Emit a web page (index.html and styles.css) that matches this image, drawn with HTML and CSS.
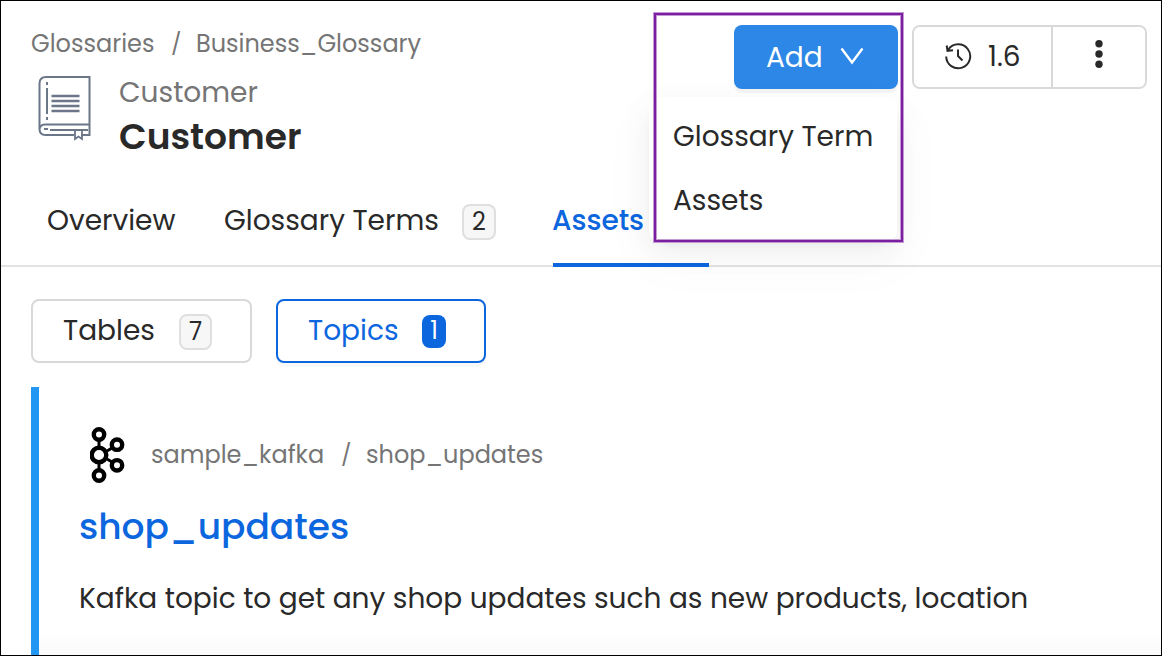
FILE: index.html
```
<!DOCTYPE html>
<html lang="en">
<head>
<meta charset="utf-8">
<title>Customer - Glossary</title>
<link rel="stylesheet" href="styles.css">
</head>
<body>
<div class="page">
  <header class="header">
    <div class="heading">
      <nav class="crumbs"><span class="crumb-root">Glossaries</span><span class="slash">/</span><span class="crumb-leaf">Business_Glossary</span></nav>
      <div class="title-row">
        <svg class="book" width="54" height="66" viewBox="0 0 54 66" fill="none" stroke="#6b7688" stroke-width="2">
          <path d="M52.500 1H9Q2.500 1 2.500 7.500V53q0 6 6 6H37M52.500 0v60M44 59h9M52.500 48.500H8Q2.500 48.500 2.500 54"/>
          <path d="M10 6v3M10 12v26M10 41v3M7 53h4M13 54h38"/>
          <path stroke-width="2.400" d="M14.500 20h28M14.500 25h28M14.500 30h28M14.500 35h28"/>
          <path d="M38 54v9l3.500-2.500L45 63v-9" stroke-width="1.800"/>
        </svg>
        <div class="titles">
          <div class="subtitle">Customer</div>
          <h1 class="title">Customer</h1>
        </div>
      </div>
    </div>
    <div class="actions">
      <div class="add-wrap">
        <button class="add"><span class="add-label">Add</span>
          <svg width="24" height="18" viewBox="0 0 24 18" fill="none" stroke="#fff" stroke-width="2.400"><path d="M1.500 1.500 12 15.500 22.500 1.500"/></svg>
        </button>
        <div class="menu"><div class="item item-term">Glossary Term</div><div class="item item-assets">Assets</div></div>
        <div class="highlight"></div>
      </div>
      <div class="group">
        <button class="version">
          <svg width="28" height="28" viewBox="0 0 28 28" fill="none" stroke="#292929" stroke-width="2"><path d="M2.200 14.500A12 12 0 1 0 4.300 7.500M2.700 3.500l.8 5.300 5.500-.5M14 7.500V14l4.500 4.500"/></svg>
          <span class="version-label">1.6</span>
        </button>
        <button class="more"><svg width="8" height="28" viewBox="0 0 8 28" fill="#292929"><circle cx="4" cy="3.700" r="3.700"/><circle cx="4" cy="14" r="3.700"/><circle cx="4" cy="24.300" r="3.700"/></svg></button>
      </div>
    </div>
  </header>
  <nav class="tabs">
    <div class="tab tab-overview">Overview</div>
    <div class="tab tab-terms"><span class="tab-label">Glossary Terms</span><span class="badge">2</span></div>
    <div class="tab tab-assets">Assets</div>
  </nav>
  <div class="filters">
    <button class="filter tables"><span>Tables</span><span class="badge badge-tables">7</span></button>
    <button class="filter topics"><span>Topics</span><span class="badge badge-on">1</span></button>
  </div>
  <article class="card">
    <div class="source">
      <svg width="36" height="58" viewBox="0 0 36 58" fill="none" stroke="#000" stroke-width="4.400">
        <path stroke-width="3" d="M9 14v7M9 37v7M17 25l5-3M17 33l5 3"/>
        <circle cx="9" cy="8.500" r="5.200"/><circle cx="9" cy="29" r="7.300"/><circle cx="9" cy="49.500" r="5.200"/><circle cx="27" cy="18.700" r="5.200"/><circle cx="27" cy="39.300" r="5.200"/>
      </svg>
      <span class="src-root">sample_kafka</span><span class="slash">/</span><span class="src-leaf">shop_updates</span>
    </div>
    <h2 class="name">shop_updates</h2>
    <p class="desc">Kafka topic to get any shop updates such as new products, location</p>
  </article>
</div>
</body>
</html>
```
FILE: styles.css
```
* { box-sizing: border-box; }
body { margin: 0; font-family: Poppins, Inter, sans-serif; font-size: 28px; color: #292929; background: #fff; }
button { font: inherit; color: inherit; background: #fff; padding: 0; margin: 0; }
svg { display: block; flex: none; }
span, .item, .tab, .desc, .name { white-space: nowrap; }
.page { width: 1162px; height: 656px; overflow: hidden; border: 1px solid #000; display: flex; flex-direction: column; }
.header { display: flex; justify-content: space-between; height: 175px; padding: 24px 14px 0 30px; flex: none; }
.crumbs { display: flex; height: 38px; line-height: 38px; font-size: 24px; color: #757575; }
.crumb-root { width: 140px; }
.slash { width: 25px; font-size: 22px; }
.title-row { display: flex; gap: 28px; padding: 13px 0 0 6px; }
.titles { margin-top: -5px; }
.subtitle { height: 44px; line-height: 44px; color: #757575; }
.title { margin: 0; font-size: 36px; line-height: 44px; font-weight: 600; }
.actions { display: flex; gap: 14px; }
.add-wrap { position: relative; }
.add { display: flex; align-items: center; width: 164px; height: 64px; padding: 0 34px 3px 32px; justify-content: space-between; border: 0; border-radius: 8px; background: #2d87e6; color: #fff; box-shadow: 0 4px 0 rgba(0,0,0,.04); }
.add-label { padding-top: 4px; }
.menu { position: absolute; z-index: 2; top: 72px; right: 1px; width: 248px; height: 143px; padding: 8px 0; border-radius: 8px; background: #fff; box-shadow: 0 6px 12px -8px rgba(0,0,0,.12), 0 12px 32px rgba(0,0,0,.06), 0 18px 56px 16px rgba(0,0,0,.015); }
.item { height: 64px; line-height: 64px; padding-left: 24px; }
.highlight { position: absolute; z-index: 3; top: -12px; left: -80px; width: 249px; height: 229px; border: 2px solid #7a1fa2; box-shadow: 0 0 0 1px #c39ad2, inset 0 0 0 1px #c39ad2; }
.group { display: flex; width: 235px; height: 64px; border: 2px solid #d9d9d9; border-radius: 8px; overflow: hidden; }
.version { display: flex; align-items: center; width: 139px; padding: 0 0 3px 30px; gap: 16px; border: 0; border-right: 2px solid #d9d9d9; }
.version-label { padding-top: 3px; }
.more { flex: 1; display: flex; justify-content: center; border: 0; padding-top: 13px; }
.tabs { display: flex; height: 91px; padding-left: 46px; border-bottom: 2px solid #e2e2e2; flex: none; }
.tab { display: flex; height: 91px; line-height: 90px; }
.tab-overview { width: 176px; }
.tab-terms { width: 330px; justify-content: space-between; padding-right: 57px; align-items: center; }
.tab-label { margin-left: 1px; padding-bottom: 2px; }
.tab-assets { width: 156px; color: #0c66de; font-weight: 500; border-bottom: 4px solid #0c66de; text-indent: -1px; }
.badge { display: flex; align-items: center; justify-content: center; width: 34px; height: 36px; border: 2px solid #dfdfdf; border-radius: 8px; background: #f7f7f7; font-size: 24px; line-height: 1; }
.badge-tables { width: 33px; margin-top: 2px; }
.filters { display: flex; gap: 24px; padding: 32px 0 24px 30px; flex: none; }
.filter { display: flex; align-items: center; justify-content: space-between; height: 64px; border: 2px solid #d9d9d9; border-radius: 8px; }
.tables { width: 221px; padding: 0 38px 0 30px; }
.topics { width: 210px; padding: 0 38px 0 30px; border-color: #0c66de; color: #0c66de; box-shadow: 0 4px 0 rgba(0,0,0,.025); }
.badge-on { width: 24px; height: 33px; border: 0; background: #0c66de; color: #fff; }
.card { flex: 1; margin-left: 30px; padding: 39px 0 0 40px; border-left: 8px solid #2196f3; background: linear-gradient(#fff 245px, #fafafa 269px); }
.source { display: flex; align-items: center; height: 58px; padding-left: 11px; font-size: 24px; color: #757575; }
.source span { padding-bottom: 2px; }
.src-root { width: 190px; margin-left: 25px; }
.name { margin: 13px 0 0; height: 60px; font-size: 36px; line-height: 60px; font-weight: 500; color: #0c66de; }
.desc { margin: 20px 0 0; line-height: 44px; }
```
